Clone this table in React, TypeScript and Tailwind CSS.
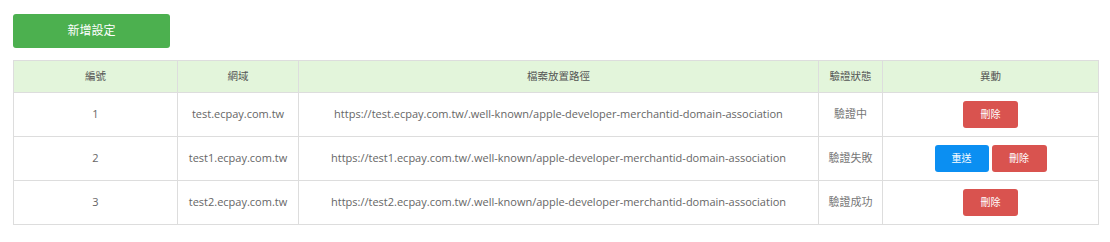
const ROWS = [
  { id: 1, domain: 'test.ecpay.com.tw', status: '驗證中', resend: false },
  { id: 2, domain: 'test1.ecpay.com.tw', status: '驗證失敗', resend: true },
  { id: 3, domain: 'test2.ecpay.com.tw', status: '驗證成功', resend: false },
];

export default function App() {
  return (
    <div
      className="bg-white w-[1110px] h-[242px] pt-[14px] pl-[13px] text-[#666]"
      style={{ fontFamily: '"Open Sans", "Noto Sans CJK TC", sans-serif' }}
    >
      <button className="w-[157px] h-[34px] rounded-[3px] bg-[#4cb04f] text-white text-[12px]">
        新增設定
      </button>

      <table className="mt-[12px] w-[1086px] border-collapse border border-[#ddd] text-[11px]">
        <thead>
          <tr className="bg-[#e3f5db] h-[32px] text-[10.5px] text-[#555]">
            <th className="w-[164px] border border-[#ddd] font-normal">編號</th>
            <th className="w-[121px] border border-[#ddd] font-normal">網域</th>
            <th className="w-[520px] border border-[#ddd] font-normal">檔案放置路徑</th>
            <th className="w-[64px] border border-[#ddd] font-normal">驗證狀態</th>
            <th className="border border-[#ddd] font-normal">異動</th>
          </tr>
        </thead>
        <tbody>
          {ROWS.map((r) => (
            <tr key={r.id} className="h-[44px] text-center">
              <td className="border border-[#ddd]">{r.id}</td>
              <td className="border border-[#ddd]">{r.domain}</td>
              <td className="border border-[#ddd]">
                https://{r.domain}/.well-known/apple-developer-merchantid-domain-association
              </td>
              <td className="border border-[#ddd] text-[11px] text-[#777]">{r.status}</td>
              <td className="border border-[#ddd]">
                <div className="flex justify-center gap-[3px]">
                  {r.resend && (
                    <button className="w-[54px] h-[27px] rounded-[3px] bg-[#0b8ff2] text-white text-[10px]">
                      重送
                    </button>
                  )}
                  <button className="w-[55px] h-[27px] rounded-[3px] bg-[#d9534f] text-white text-[10px]">
                    刪除
                  </button>
                </div>
              </td>
            </tr>
          ))}
        </tbody>
      </table>
    </div>
  );
}
